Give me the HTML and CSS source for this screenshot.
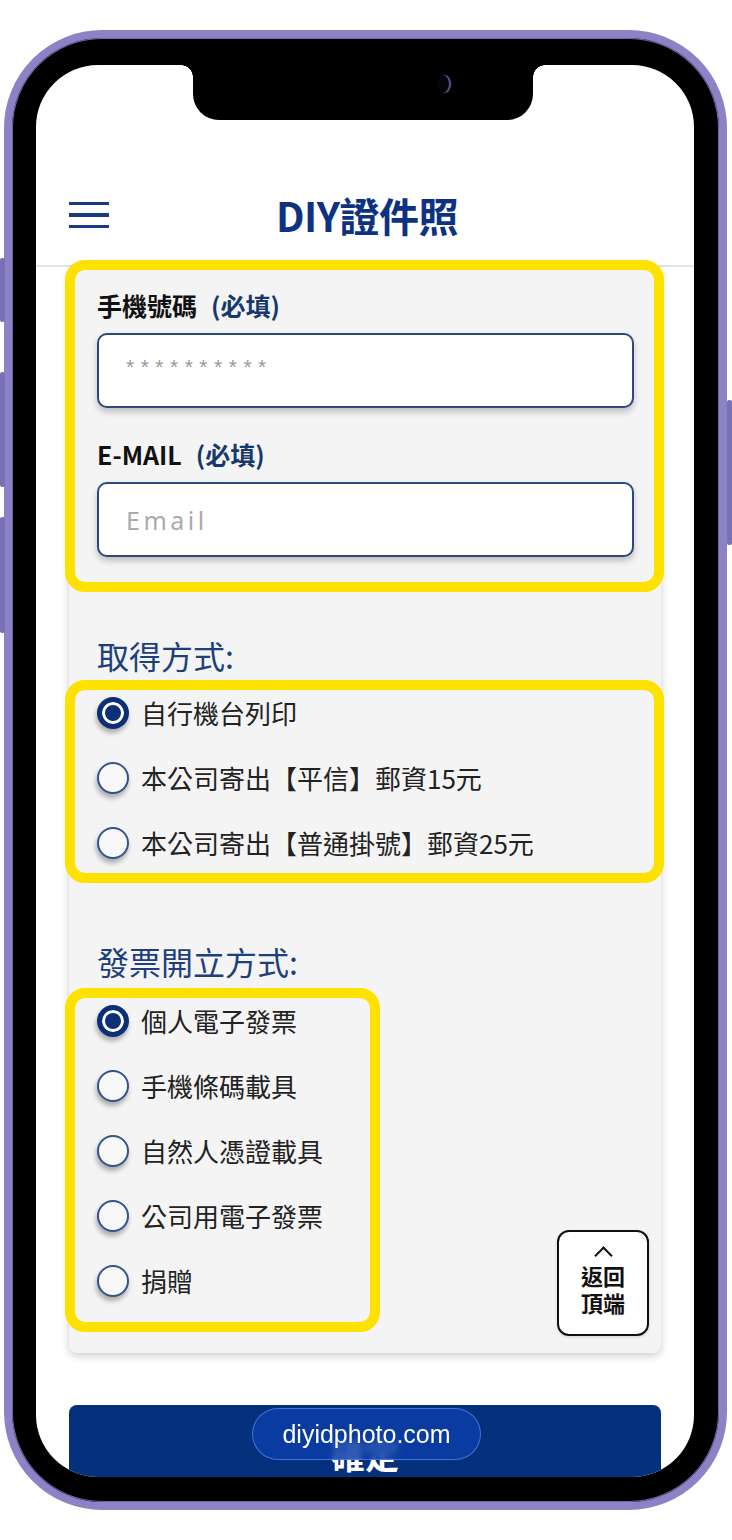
FILE: index.html
```html
<!DOCTYPE html>
<html lang="zh-Hant">
<head>
<meta charset="utf-8">
<title>DIY證件照</title>
<link rel="stylesheet" href="styles.css">
</head>
<body>
<div class="phone">
  <span class="side-btn side-l1"></span>
  <span class="side-btn side-l2"></span>
  <span class="side-btn side-l3"></span>
  <span class="side-btn side-r1"></span>
  <div class="screen">
    <div class="notch"><span class="camera"></span></div>
    <header class="header">
      <div class="burger"><span></span><span></span><span></span></div>
      <h1 class="title">DIY證件照</h1>
      <div class="header-spacer"></div>
    </header>
    <main class="card">
      <div class="hl hl-contact">
        <label class="field-label" for="phone">手機號碼<span class="req">(必填)</span></label>
        <input class="field-input field-stars" id="phone" type="text" placeholder="**********">
        <label class="field-label field-label-2" for="email">E-MAIL<span class="req">(必填)</span></label>
        <input class="field-input field-email" id="email" type="text" placeholder="Email">
      </div>

      <h2 class="section-title section-ship">取得方式:</h2>
      <div class="hl hl-ship radio-group">
        <div class="radio-row"><span class="radio on"></span><span>自行機台列印</span></div>
        <div class="radio-row"><span class="radio"></span><span>本公司寄出【平信】郵資15元</span></div>
        <div class="radio-row"><span class="radio"></span><span>本公司寄出【普通掛號】郵資25元</span></div>
      </div>

      <h2 class="section-title section-invoice">發票開立方式:</h2>
      <div class="hl hl-invoice radio-group">
        <div class="radio-row"><span class="radio on"></span><span>個人電子發票</span></div>
        <div class="radio-row"><span class="radio"></span><span>手機條碼載具</span></div>
        <div class="radio-row"><span class="radio"></span><span>自然人憑證載具</span></div>
        <div class="radio-row"><span class="radio"></span><span>公司用電子發票</span></div>
        <div class="radio-row"><span class="radio"></span><span>捐贈</span></div>
      </div>
    </main>

    <div class="confirm">確定</div>

    <a class="back-top" href="#">
      <span class="caret"></span>
      <span class="back-line">返回</span>
      <span class="back-line">頂端</span>
    </a>

    <div class="url-pill">diyidphoto.com</div>
  </div>
</div>
</body>
</html>
```

FILE: styles.css
```css
* {
  box-sizing: border-box;
  margin: 0;
  padding: 0;
}

html,
body {
  width: 732px;
  height: 1540px;
  background: #ffffff;
  overflow: hidden;
}

body {
  font-family: "Noto Sans CJK TC", "Noto Sans", sans-serif;
  color: #222222;
}

/* ---------- phone frame ---------- */
.phone {
  position: relative;
  margin: 30px 0 0 4px;
  width: 723px;
  height: 1480px;
  border: 8px solid #8b83c5;
  border-radius: 98px;
  background: #000000;
  padding: 27px 25px 25px 24px;
  box-shadow: inset 0 0 0 1px #6d65a6;
}

.side-btn {
  position: absolute;
  width: 5px;
  background: #7a71b5;
  border-radius: 2px;
}

.side-l1 { left: -12px; top: 220px; height: 64px; }
.side-l2 { left: -12px; top: 334px; height: 115px; }
.side-l3 { left: -12px; top: 479px; height: 116px; }
.side-r1 { right: -13px; top: 362px; height: 145px; }

.screen {
  position: relative;
  height: 100%;
  background: #ffffff;
  border-radius: 62px;
  overflow: hidden;
}

.notch {
  position: absolute;
  top: 0;
  left: 157px;
  width: 340px;
  height: 55px;
  background: #000000;
  border-radius: 0 0 26px 26px;
  z-index: 5;
}

.notch::before,
.notch::after {
  content: "";
  position: absolute;
  top: 0;
  width: 12px;
  height: 12px;
}

.notch::before {
  left: -12px;
  background: radial-gradient(circle at 0 100%, transparent 11.5px, #000 12px);
}

.notch::after {
  right: -12px;
  background: radial-gradient(circle at 100% 100%, transparent 11.5px, #000 12px);
}

.camera {
  position: absolute;
  left: 246px;
  top: 10px;
  width: 12px;
  height: 18px;
  border-radius: 50%;
  background: #050509;
  box-shadow: inset -2px 0 1px #5a55a0, 0 0 2px #222;
}

/* ---------- header ---------- */
.header {
  height: 202px;
  border-bottom: 2px solid #e3e3e3;
  padding-top: 100px;
  display: grid;
  grid-template-columns: 1fr auto 1fr;
  align-items: center;
}

.burger {
  display: flex;
  flex-direction: column;
  gap: 8px;
  width: 40px;
  margin-left: 33px;
}

.burger span {
  display: block;
  height: 3.5px;
  background: #1a3a84;
}

.title {
  font-size: 40px;
  font-weight: 700;
  line-height: 1;
  color: #0e3282;
  letter-spacing: -0.5px;
  margin-left: 4px;
}

/* ---------- card ---------- */
.card {
  position: relative;
  margin: 0 33px;
  background: #f4f4f4;
  border-radius: 0 0 8px 8px;
  box-shadow: 0 3px 8px rgba(0, 0, 0, 0.2);
  padding: 21px 27px 40px 28px;
}

.hl {
  position: relative;
}

.hl::after {
  content: "";
  position: absolute;
  border: 10px solid #ffe100;
  border-radius: 20px;
  pointer-events: none;
}

.hl-contact::after { top: -28px; bottom: -35px; left: -32px; right: -30px; }
.hl-ship::after { top: 0; bottom: -8px; left: -32px; right: -30px; }
.hl-invoice::after { top: 0; bottom: -19px; left: -32px; right: -30px; }

.field-label {
  display: block;
  font-size: 25px;
  font-weight: 700;
  line-height: 34px;
  color: #111111;
  margin-bottom: 11px;
}

.field-label-2 {
  margin-top: 29px;
}

.req {
  color: #17386e;
  margin-left: 14px;
}

.field-input {
  display: block;
  width: 100%;
  height: 75px;
  border: 2px solid #2b4a7c;
  border-radius: 10px;
  background: #ffffff;
  box-shadow: 0 4px 6px rgba(0, 0, 0, 0.22);
  padding: 0 27px;
  outline: none;
  color: #222;
}

.field-stars {
  font-family: "Liberation Sans", sans-serif;
  font-size: 21px;
  letter-spacing: 6.5px;
  padding-bottom: 8px;
}

.field-stars::placeholder {
  color: #9a9a9a;
}

.field-email {
  font-family: "Noto Sans", "Noto Sans CJK TC", sans-serif;
  font-size: 25px;
  letter-spacing: 3.5px;
}

.field-email::placeholder {
  color: #ababab;
}

.section-title {
  font-size: 32px;
  font-weight: 400;
  line-height: 40px;
  color: #1e3f7e;
}

.section-ship {
  margin-top: 78px;
  margin-bottom: 5px;
}

.section-invoice {
  margin-top: 66px;
  margin-bottom: 7px;
}

.hl-invoice {
  width: 253px;
}

.radio-row {
  display: flex;
  align-items: center;
  gap: 12px;
  height: 65px;
  font-size: 26px;
  color: #222222;
  white-space: nowrap;
}

.radio {
  flex: none;
  width: 32px;
  height: 32px;
  border-radius: 50%;
  border: 2px solid #33528f;
  background: #f8f8f8;
  box-shadow: -1px 4px 5px rgba(0, 0, 0, 0.3);
}

.radio.on {
  border: 5px solid #0c2f78;
  background: #0c2f78;
  box-shadow: inset 0 0 0 3px #ffffff, -1px 4px 5px rgba(0, 0, 0, 0.3);
}

/* ---------- bottom ---------- */
.confirm {
  margin: 52px 33px 0;
  height: 110px;
  background: #05307c;
  border-radius: 8px 8px 0 0;
  color: #ffffff;
  font-size: 34px;
  font-weight: 700;
  line-height: 100px;
  text-align: center;
}

.back-top {
  position: absolute;
  right: 45px;
  bottom: 141px;
  width: 92px;
  height: 106px;
  border: 2px solid #111111;
  border-radius: 12px;
  background: #ffffff;
  box-shadow: 0 1px 3px rgba(0, 0, 0, 0.15);
  display: flex;
  flex-direction: column;
  align-items: center;
  padding-top: 17px;
  text-decoration: none;
  color: #111111;
}

.caret {
  width: 13px;
  height: 13px;
  border-top: 2px solid #111;
  border-left: 2px solid #111;
  transform: rotate(45deg);
}

.back-line {
  display: block;
  font-size: 22px;
  font-weight: 700;
  line-height: 27px;
}

.url-pill {
  position: absolute;
  left: 216px;
  bottom: 17px;
  width: 229px;
  height: 52px;
  border-radius: 26px;
  background: rgba(12, 62, 168, 0.82);
  border: 1px solid rgba(80, 130, 235, 0.8);
  backdrop-filter: blur(3px);
  color: #ffffff;
  font-family: "Liberation Sans", Arial, sans-serif;
  font-size: 25px;
  line-height: 50px;
  text-align: center;
}
```
